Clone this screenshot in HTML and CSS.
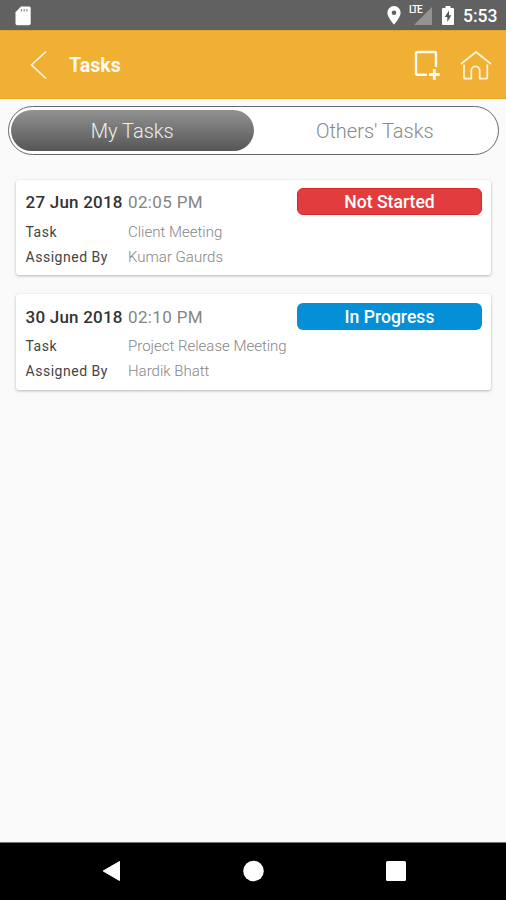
FILE: index.html
```html
<!DOCTYPE html>
<html lang="en">
<head>
<meta charset="utf-8">
<title>Tasks</title>
<link rel="stylesheet" href="styles.css">
</head>
<body>
<div class="screen">
  <div class="status-bar">
    <svg class="sd" width="16" height="20" viewBox="0 0 16 20"><path d="M6 .5h8.200q1.500 0 1.500 1.500v15.500q0 1.800-1.800 1.800H2.300Q.5 19.300.5 17.500V6.200z" fill="#fff"/><path d="M6.500 3v2.500M9.200 3v2.500M11.900 3v2.500" stroke="#8a8a8a" stroke-width="1.200"/></svg>
    <svg class="pin" width="14" height="19" viewBox="0 0 14 19"><path fill="#fff" fill-rule="evenodd" d="M7 0a6.600 6.600 0 0 0-6.600 6.700C.4 11.500 7 18.500 7 18.500s6.600-7 6.600-11.800A6.600 6.600 0 0 0 7 0zm0 4.400a2.300 2.300 0 1 1 0 4.600 2.300 2.300 0 0 1 0-4.600z"/></svg>
    <div class="signal"><svg width="18" height="18" viewBox="0 0 18 18"><path d="M18 0v18H0z" fill="#939393"/></svg><span class="lte">LTE</span></div>
    <svg class="battery" width="12" height="19" viewBox="0 0 12 19"><path d="M3.500 0h5v2H11q1 0 1 1v15q0 1-1 1H1q-1 0-1-1V3q0-1 1-1h2.500z" fill="#fff"/><path d="M7 4.500 2.800 11h2.500v5L9.400 9.300H7z" fill="#555"/></svg>
    <span class="clock">5:53</span>
  </div>
  <header class="app-bar">
    <svg class="back" width="18" height="30" viewBox="0 0 18 30"><path d="M16 1.500 1.500 15 16 28.500" fill="none" stroke="#fff6dc" stroke-width="1.700"/></svg>
    <h1 class="title">Tasks</h1>
    <svg class="add" width="26" height="30" viewBox="0 0 26 30"><path d="M13 24.700H3.500q-1.500 0-1.500-1.500V3.500Q2 2 3.500 2h17Q22 2 22 3.500V17" fill="none" stroke="#fffaf0" stroke-width="2.400"/><path d="M20.300 19v11M15 24.500h10.700" stroke="#fffaf0" stroke-width="2.900"/></svg>
    <svg class="home" width="32" height="30" viewBox="0 0 32 30"><path d="M1 14 16 2l15 12M4 14.500V28q0 .7.700.7h6.600V20.500a4.200 4.200 0 0 1 8.400 0v8.200h6.600q1 0 1-.7V14.500" fill="none" stroke="#fff3d2" stroke-width="1.800"/></svg>
  </header>
  <nav class="tabs">
    <div class="tab active"><span class="tab-mine">My Tasks</span></div>
    <div class="tab"><span class="tab-others">Others' Tasks</span></div>
  </nav>
  <main class="list">
    <article class="card">
      <div class="row head"><span class="date">27 Jun 2018</span><span class="time">02:05 PM</span><span class="badge red">Not Started</span></div>
      <div class="row"><span class="label task">Task</span><span class="value">Client Meeting</span></div>
      <div class="row"><span class="label">Assigned By</span><span class="value">Kumar Gaurds</span></div>
    </article>
    <article class="card second">
      <div class="row head"><span class="date">30 Jun 2018</span><span class="time">02:10 PM</span><span class="badge blue">In Progress</span></div>
      <div class="row"><span class="label task">Task</span><span class="value">Project Release Meeting</span></div>
      <div class="row"><span class="label">Assigned By</span><span class="value">Hardik Bhatt</span></div>
    </article>
  </main>
  <footer class="nav-bar">
    <svg width="19" height="22" viewBox="0 0 19 22"><path d="M17.500 1.500v19L1.200 11z" fill="#fff" stroke="#fff" stroke-linejoin="round"/></svg>
    <svg width="22" height="22" viewBox="0 0 22 22"><circle cx="10.500" cy="11" r="10.300" fill="#fff"/></svg>
    <svg width="20" height="20" viewBox="0 0 20 20"><rect width="20" height="20" rx="1.500" fill="#fff"/></svg>
  </footer>
</div>
</body>
</html>
```
FILE: styles.css
```css
* { box-sizing: border-box; }
body { margin: 0; font-family: Roboto, sans-serif; }
svg { display: block; flex: none; }
.screen { width: 506px; height: 900px; display: flex; flex-direction: column; background: #fafafa; }
.status-bar { height: 30px; flex: none; background: #616161; display: flex; align-items: flex-start; padding: 6px 9px 0 15px; }
.pin { margin-left: auto; }
.signal { position: relative; margin-left: 13px; width: 18px; padding-top: 1px; }
.lte { position: absolute; left: -5px; top: -1px; font-size: 10px; line-height: 10px; font-weight: 500; letter-spacing: -1.2px; color: #fff; }
.battery { margin-left: 10px; }
.clock { width: 34px; margin-left: 9px; font-size: 17.5px; line-height: 20px; font-weight: 500; color: #fff; white-space: nowrap; }
.app-bar { height: 69px; flex: none; background: #f0b034; border-top: 1px solid #e6a321; border-bottom: 1px solid #e7a51f; display: flex; align-items: center; padding: 0 14px 0 30px; }
.title { margin: 2px auto 0 21px; font-size: 19.6px; line-height: 24px; font-weight: 700; color: #fffaf0; }
.home { margin-left: 20px; }
.tabs { flex: none; height: 49px; margin: 7px 7px 0 8px; border: 1px solid #686868; border-radius: 25px; background: #fff; display: flex; padding: 3px 2px; }
.tab { flex: 1; display: flex; align-items: center; justify-content: center; border-radius: 21px; color: #888; font-size: 20px; font-weight: 300; padding-top: 1px; }
.tab.active { background: linear-gradient(#929292, #565656); color: #eee; }
.list { flex: 1; padding: 25px 15px 0 16px; display: flex; flex-direction: column; gap: 19px; }
.card { height: 95px; background: #fff; border-radius: 3px; box-shadow: 0 1px 3px rgba(0,0,0,.28); padding: 8px 9px 0 9px; }
.card.second { height: 96px; padding-top: 9px; }
.row { display: flex; height: 25px; align-items: center; font-size: 14px; white-space: nowrap; }
.row.head { height: 27px; margin-bottom: 4px; font-size: 17px; }
.second .row.head { margin-bottom: 3.5px; }
.date { width: 103px; padding-left: .5px; font-weight: 500; letter-spacing: .22px; color: #333; }
.time { color: #858585; letter-spacing: .35px; }
.badge { margin-left: auto; width: 185px; height: 27px; border-radius: 6px; color: #fff; font-size: 17.6px; line-height: 28px; font-weight: 500; text-align: center; }
.red { background: #e33c3f; border: 1px solid #d9292c; line-height: 27px; }
.blue { background: #058fd7; }
.label { width: 103px; padding-left: .5px; letter-spacing: .52px; color: #444; }
.value { color: #858585; font-weight: 300; font-size: 15px; }
.nav-bar { flex: none; height: 58px; background: #000; border-top: 1px solid #777; display: flex; align-items: center; justify-content: space-between; padding: 0 100px 2px 102px; }
```
